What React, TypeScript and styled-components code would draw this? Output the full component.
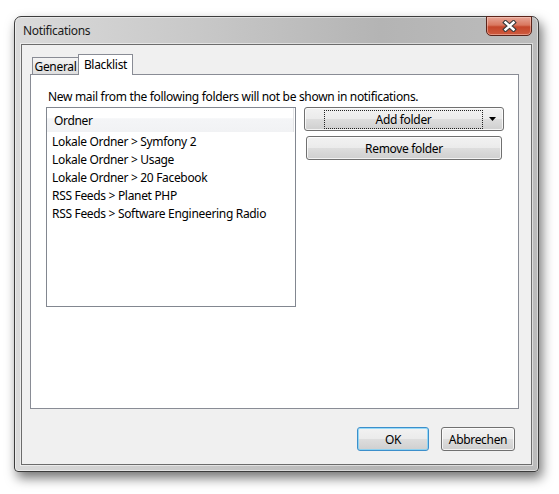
import React from "react";
import styled, { createGlobalStyle } from "styled-components";

const GlobalStyle = createGlobalStyle`
  html, body { margin: 0; padding: 0; background: #ffffff; }
  body {
    font-family: "Noto Sans", "Open Sans", sans-serif;
    font-size: 12px;
    letter-spacing: -0.32px;
    color: #000;
  }
  * { box-sizing: border-box; }
`;

const Page = styled.div`
  width: 559px;
  height: 494px;
  padding: 16px 0 0 14px;
  overflow: hidden;
  background: #ffffff;
`;

const Window = styled.div`
  width: 525px;
  height: 456px;
  border: 1px solid #3c3c3c;
  border-radius: 7px 7px 4px 4px;
  padding: 0 6px 6px;
  display: flex;
  flex-direction: column;
  background: linear-gradient(90deg, #dadada 0%, #c8c8c8 35%, #b4b4b4 70%, #bcbcbc 100%);
  box-shadow: inset 0 0 0 1px rgba(255, 255, 255, 0.45), 3px 6px 12px rgba(0, 0, 0, 0.55);
`;

const TitleBar = styled.div`
  height: 27px;
  display: flex;
  align-items: flex-start;
  justify-content: space-between;
`;

const Title = styled.span`
  align-self: center;
  margin-left: 2px;
  padding-top: 1px;
  font-size: 12px;
  line-height: 14px;
  color: #1a1a1a;
`;

const CloseButton = styled.div`
  width: 46px;
  height: 20px;
  margin-top: -1px;
  border: 1px solid #5b241a;
  border-radius: 0 0 5px 5px;
  display: flex;
  align-items: center;
  justify-content: center;
  background: linear-gradient(#e7a596 0%, #d9775f 45%, #c4462b 55%, #cf5b3f 100%);
  box-shadow: inset 0 0 0 1px rgba(255, 220, 210, 0.45);
`;

const Client = styled.div`
  flex: 1;
  border: 1px solid #6c6c6c;
  background: #f0f0f0;
  padding: 9px 0 0 8px;
  display: flex;
  flex-direction: column;
  box-shadow: 0 0 0 1px rgba(255, 255, 255, 0.5);
`;

const TabStrip = styled.div`
  display: flex;
  align-items: flex-end;
  height: 20px;
  padding-left: 2px;
`;

const Tab = styled.div<{ $active?: boolean; $w: number }>`
  width: ${(p) => p.$w}px;
  height: ${(p) => (p.$active ? 21 : 17)}px;
  margin-bottom: ${(p) => (p.$active ? -1 : 0)}px;
  position: relative;
  z-index: ${(p) => (p.$active ? 1 : 0)};
  border: 1px solid #898c95;
  border-bottom: none;
  border-right: ${(p) => (p.$active ? "1px solid #898c95" : "none")};
  background: ${(p) =>
    p.$active ? "#ffffff" : "linear-gradient(#f4f4f4 0%, #e9e9e9 50%, #dedede 100%)"};
  display: flex;
  align-items: center;
  justify-content: center;
  padding-top: 1px;
  padding-bottom: ${(p) => (p.$active ? 2 : 0)}px;
  line-height: 14px;
  white-space: nowrap;
`;

const TabPanel = styled.div`
  width: 489px;
  height: 335px;
  border: 1px solid #898c95;
  background: #ffffff;
  padding: 14px 0 0 15px;
`;

const Hint = styled.div`
  margin: 0 0 3px 2px;
  line-height: 15px;
  white-space: nowrap;
`;

const PanelBody = styled.div`
  display: flex;
  gap: 8px;
  align-items: flex-start;
`;

const ListBox = styled.div`
  width: 250px;
  height: 200px;
  border: 1px solid #828790;
  background: #ffffff;
`;

const ListHeader = styled.div`
  height: 24px;
  padding: 2px 0 0 7px;
  display: flex;
  align-items: center;
  background: linear-gradient(#ffffff 0%, #ffffff 40%, #f4f5f7 45%, #f1f2f4 100%);
  border-right: 1px solid #e3e4e6;
  margin-right: 1px;
  line-height: 14px;
`;

const ListItem = styled.div`
  height: 18px;
  padding: 1px 0 0 5px;
  display: flex;
  align-items: center;
  line-height: 14px;
  white-space: nowrap;
`;

const ButtonColumn = styled.div`
  display: flex;
  flex-direction: column;
  gap: 5px;
`;

const PushButton = styled.button<{ $w: number; $default?: boolean; $inset?: number }>`
  width: ${(p) => p.$w}px;
  height: 24px;
  margin: 0 0 0 ${(p) => p.$inset ?? 0}px;
  padding: 1px 0 0;
  border: 1px solid ${(p) => (p.$default ? "#3c8fcb" : "#707070")};
  border-radius: 3px;
  background: linear-gradient(#f2f2f2 0%, #ebebeb 48%, #dddddd 52%, #cfcfcf 100%);
  box-shadow: inset 0 0 0 1px ${(p) => (p.$default ? "rgba(120, 210, 250, 0.75)" : "rgba(255, 255, 255, 0.75)")};
  font-family: "Noto Sans", "Open Sans", sans-serif;
  font-size: 12px;
  letter-spacing: -0.32px;
  line-height: 14px;
  color: #000;
  display: flex;
  align-items: center;
  justify-content: center;
  white-space: nowrap;
`;

const SplitButton = styled(PushButton)`
  justify-content: flex-start;
  padding: 0 7px 0 19px;
`;

const FocusRect = styled.span`
  width: 159px;
  height: 19px;
  padding-top: 1px;
  border: 1px dotted #222;
  display: flex;
  align-items: center;
  justify-content: center;
  margin-right: 6px;
`;

const DialogButtons = styled.div`
  display: flex;
  justify-content: flex-end;
  gap: 12px;
  margin-top: 18px;
  padding-right: 16px;
`;

const folders = [
  "Lokale Ordner > Symfony 2",
  "Lokale Ordner > Usage",
  "Lokale Ordner > 20 Facebook",
  "RSS Feeds > Planet PHP",
  "RSS Feeds > Software Engineering Radio",
];

export default function App() {
  return (
    <Page>
      <GlobalStyle />
      <Window>
        <TitleBar>
          <Title>Notifications</Title>
          <CloseButton>
            <svg width="15" height="12" viewBox="0 0 15 12">
              <path d="M3.5 2.5 L11.5 9.5 M11.5 2.5 L3.5 9.5" stroke="#3b3b3b" strokeWidth="4.6" strokeLinecap="square" />
              <path d="M3.5 2.5 L11.5 9.5 M11.5 2.5 L3.5 9.5" stroke="#ffffff" strokeWidth="2.4" strokeLinecap="square" />
            </svg>
          </CloseButton>
        </TitleBar>
        <Client>
          <TabStrip>
            <Tab $w={46}>General</Tab>
            <Tab $w={55} $active>
              Blacklist
            </Tab>
          </TabStrip>
          <TabPanel>
            <Hint>New mail from the following folders will not be shown in notifications.</Hint>
            <PanelBody>
              <ListBox>
                <ListHeader>Ordner</ListHeader>
                {folders.map((f) => (
                  <ListItem key={f}>{f}</ListItem>
                ))}
              </ListBox>
              <ButtonColumn>
                <SplitButton $w={200}>
                  <FocusRect>Add folder</FocusRect>
                  <svg width="7" height="4" viewBox="0 0 7 4">
                    <polygon points="0,0 7,0 3.5,4" fill="#000" />
                  </svg>
                </SplitButton>
                <PushButton $w={196} $inset={2}>
                  Remove folder
                </PushButton>
              </ButtonColumn>
            </PanelBody>
          </TabPanel>
          <DialogButtons>
            <PushButton $w={72} $default>
              OK
            </PushButton>
            <PushButton $w={74}>Abbrechen</PushButton>
          </DialogButtons>
        </Client>
      </Window>
    </Page>
  );
}
